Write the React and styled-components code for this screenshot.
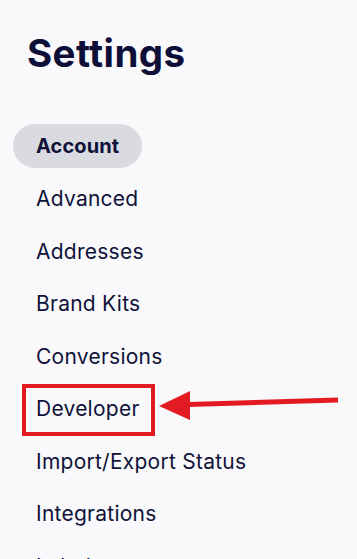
import React from "react";
import styled, { createGlobalStyle } from "styled-components";

const Global = createGlobalStyle`
  html, body { margin: 0; padding: 0; background: #f9f9fb; }
  body { font-family: "Inter", "Noto Sans", sans-serif; color: #0e1036; }
`;

const Page = styled.div`
  position: relative;
  width: 357px;
  height: 559px;
  overflow: hidden;
  padding: 0 0 0 13px;
  box-sizing: border-box;
`;

const Title = styled.h1`
  margin: 0;
  padding: 31px 0 0 14px;
  font-size: 38.5px;
  line-height: 44px;
  font-weight: 700;
  letter-spacing: 0.4px;
  color: #0d0f38;
`;

const Nav = styled.nav`
  display: flex;
  flex-direction: column;
  align-items: flex-start;
  gap: 8.5px;
  margin-top: 49px;
`;

const Item = styled.div`
  position: relative;
  display: flex;
  align-items: center;
  height: 44px;
  padding: 0 23px;
  border-radius: 22px;
  font-size: ${(p) => (p.$active ? "20px" : "21px")};
  letter-spacing: ${(p) => (p.$active ? "0.1px" : "0.25px")};
  font-weight: ${(p) => (p.$active ? 700 : 400)};
  background: ${(p) => (p.$active ? "#d9dbe1" : "transparent")};
  color: #10123a;
  white-space: nowrap;
`;

const Highlight = styled.span`
  position: absolute;
  left: 9px;
  top: -3px;
  width: 133px;
  height: 52px;
  box-sizing: border-box;
  border: 4.5px solid #e21b23;
`;

const Arrow = styled.svg`
  position: absolute;
  left: 155px;
  top: 385px;
`;

const items = [
  "Account",
  "Advanced",
  "Addresses",
  "Brand Kits",
  "Conversions",
  "Developer",
  "Import/Export Status",
  "Integrations",
  "Labels",
];

export default function App() {
  return (
    <>
      <Global />
      <Page>
        <Title>Settings</Title>
        <Nav>
          {items.map((t, i) => (
            <Item key={t} $active={i === 0}>
              {t}
              {t === "Developer" && <Highlight />}
            </Item>
          ))}
        </Nav>
        <Arrow width="190" height="40" viewBox="0 0 190 40">
          <path d="M4 21 L35 6 L35 35 Z" fill="#e21b23" />
          <path d="M33 19.5 L183 15" stroke="#e21b23" strokeWidth="5" fill="none" />
        </Arrow>
      </Page>
    </>
  );
}
